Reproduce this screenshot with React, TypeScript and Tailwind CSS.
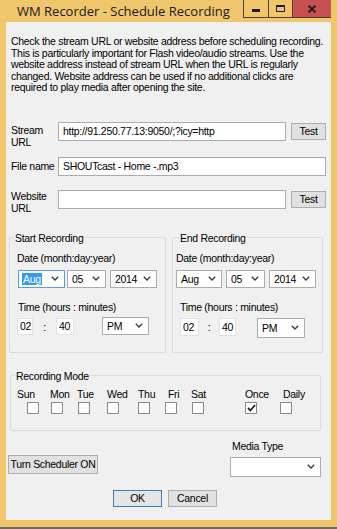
import React from "react";

function Chevron() {
  return (
    <svg width="8" height="5" viewBox="0 0 8 5" className="shrink-0">
      <polyline points="0.8,0.8 4,4 7.2,0.8" fill="none" stroke="#3c3c3c" strokeWidth="1.4" />
    </svg>
  );
}

function Sel({
  w,
  h,
  value,
  focused,
  highlight,
}: {
  w: string;
  h: string;
  value: string;
  focused?: boolean;
  highlight?: boolean;
}) {
  return (
    <div
      className={`${w} ${h} flex items-center bg-white border ${
        focused ? "border-[#569de5]" : "border-[#acacac]"
      } pl-[4px] pr-[5px]`}
    >
      {highlight ? (
        <span className="bg-[#3399ff] text-white px-[1px] leading-[12px] -ml-[1px]">{value}</span>
      ) : (
        <span className="leading-[12px]">{value}</span>
      )}
      <div className="ml-auto">
        <Chevron />
      </div>
    </div>
  );
}

function TimeBox({ w, h, value }: { w: string; h: string; value: string }) {
  return (
    <div className={`${w} ${h} bg-white border border-[#e3e3e3] flex items-center pl-[2px] leading-[12px]`}>
      {value}
    </div>
  );
}

function Btn({ w, h, label, def }: { w: string; h: string; label: string; def?: boolean }) {
  return (
    <div
      className={`${w} ${h} flex items-center justify-center whitespace-nowrap border ${
        def ? "border-[#3c7fb1] bg-[#e5e5e5]" : "border-[#adadad] bg-[#e1e1e1]"
      } leading-[12px]`}
    >
      {label}
    </div>
  );
}

function Check({ checked }: { checked?: boolean }) {
  return (
    <div className="w-[12px] h-[12px] bg-white border border-[#8a8a8a] flex items-center justify-center">
      {checked && (
        <svg width="9" height="8" viewBox="0 0 9 8">
          <polyline points="1,4 3.5,6.5 8,1" fill="none" stroke="#222" strokeWidth="1.8" />
        </svg>
      )}
    </div>
  );
}

const days = [
  { l: "Sun", lw: "w-[33px]", cw: "w-[24px]" },
  { l: "Mon", lw: "w-[27px]", cw: "w-[27px]" },
  { l: "Tue", lw: "w-[30px]", cw: "w-[29px]" },
  { l: "Wed", lw: "w-[31px]", cw: "w-[31px]" },
  { l: "Thu", lw: "w-[30px]", cw: "w-[27px]" },
  { l: "Fri", lw: "w-[23px]", cw: "w-[27px]" },
  { l: "Sat", lw: "w-[54px]", cw: "w-[53px]" },
  { l: "Once", lw: "w-[38px]", cw: "w-[35px]" },
  { l: "Daily", lw: "w-[30px]", cw: "w-[20px]" },
];

export default function App() {
  return (
    <div className="w-[337px] h-[529px] bg-[#efc66c] flex flex-col overflow-hidden font-['Liberation_Sans',Arial,sans-serif] text-[10.5px] tracking-[-0.3px] text-black">
      {/* Title bar */}
      <div className="h-[22px] flex items-start shrink-0">
        <div className="pl-[17px] pt-[2px] font-['Open_Sans',sans-serif] text-[13px] tracking-normal leading-[18px] text-[#1a1a1a] whitespace-nowrap">
          WM Recorder - Schedule Recording
        </div>
        <div className="ml-auto mr-[6px] flex h-[18px]">
          <div className="w-[25px] h-[18px] border-l border-b border-[#4d4030] flex items-end justify-center pb-[5px]">
            <div className="w-[8px] h-[3px] bg-[#1e1e1e]" />
          </div>
          <div className="w-[24px] h-[18px] border-l border-b border-[#4d4030] flex items-center justify-center">
            <div className="w-[9px] h-[7px] border border-t-2 border-[#1e1e1e]" />
          </div>
          <div className="w-[39px] h-[18px] bg-[#c75050] border-l border-b border-[#4d4030] flex items-center justify-center">
            <svg width="10" height="8" viewBox="0 0 10 8">
              <path d="M1.5 0.8 L8.5 7.2 M8.5 0.8 L1.5 7.2" stroke="#2a1a1a" strokeWidth="2" />
            </svg>
          </div>
        </div>
      </div>

      {/* Body */}
      <div className="mx-[6px] h-[498px] bg-[#f0f0f0] flex flex-col shrink-0">
        <div className="pt-[14px] pl-[5px] leading-[11.6px] whitespace-nowrap">
          Check the stream URL or website address before scheduling recording.
          <br />
          This is particularly important for Flash video/audio streams. Use the
          <br />
          website address instead of stream URL when the URL is regularly
          <br />
          changed. Website address can be used if no additional clicks are
          <br />
          required to play media after opening the site.
        </div>

        {/* Stream URL */}
        <div className="mt-[28px] flex h-[19px]">
          <div className="w-[52px] pl-[5px] pt-[2px] leading-[12px]">
            Stream
            <br />
            URL
          </div>
          <div className="w-[228px] h-[19px] bg-white border border-[#acacac] flex items-center pl-[4px] leading-[12px]">
            http://91.250.77.13:9050/;?icy=http
          </div>
          <div className="ml-[5px] flex items-center">
            <Btn w="w-[35px]" h="h-[17px]" label="Test" />
          </div>
        </div>

        {/* File name */}
        <div className="mt-[16px] flex h-[19px] items-center">
          <div className="w-[52px] pl-[5px] leading-[12px] whitespace-nowrap">File name</div>
          <div className="w-[268px] h-[19px] bg-white border border-[#acacac] flex items-center pl-[4px] leading-[12px]">
            SHOUTcast - Home -.mp3
          </div>
        </div>

        {/* Website URL */}
        <div className="mt-[14px] flex h-[19px]">
          <div className="w-[52px] pl-[5px] pt-0 leading-[12px]">
            Website
            <br />
            URL
          </div>
          <div className="w-[228px] h-[19px] bg-white border border-[#acacac]" />
          <div className="ml-[5px] flex items-center">
            <Btn w="w-[35px]" h="h-[17px]" label="Test" />
          </div>
        </div>

        {/* Start / End */}
        <div className="mt-[23px] flex">
          <fieldset className="ml-[3px] w-[157px] h-[121px] border border-[#dcdcdc] rounded-[2px]">
            <legend className="ml-[4px] px-[1px] leading-[12px]">Start Recording</legend>
            <div className="pt-[8px]">
              <div className="pl-[7px] leading-[12px]">Date (month:day:year)</div>
              <div className="mt-[6px] pl-[8px] flex">
                <Sel w="w-[47px]" h="h-[18px]" value="Aug" focused highlight />
                <div className="ml-[2px]">
                  <Sel w="w-[39px]" h="h-[18px]" value="05" />
                </div>
                <div className="ml-[4px]">
                  <Sel w="w-[47px]" h="h-[18px]" value="2014" />
                </div>
              </div>
              <div className="mt-[13px] pl-[8px] leading-[12px]">Time (hours : minutes)</div>
              <div className="mt-[4px] pl-[7px] flex items-start">
                <div className="mt-[1px]">
                  <TimeBox w="w-[16px]" h="h-[17px]" value="02" />
                </div>
                <div className="w-[23px] text-center mt-[4px] leading-[12px]">:</div>
                <div className="mt-[1px]">
                  <TimeBox w="w-[18px]" h="h-[17px]" value="40" />
                </div>
                <div className="ml-[28px]">
                  <Sel w="w-[47px]" h="h-[18px]" value="PM" />
                </div>
              </div>
            </div>
          </fieldset>

          <fieldset className="ml-[6px] w-[151px] h-[121px] border border-[#dcdcdc] rounded-[2px]">
            <legend className="ml-[6px] px-[1px] leading-[12px]">End Recording</legend>
            <div className="pt-[8px]">
              <div className="pl-[3px] leading-[12px]">Date (month:day:year)</div>
              <div className="mt-[6px] pl-[3px] flex">
                <Sel w="w-[46px]" h="h-[18px]" value="Aug" />
                <div className="ml-[4px]">
                  <Sel w="w-[39px]" h="h-[18px]" value="05" />
                </div>
                <div className="ml-[4px]">
                  <Sel w="w-[47px]" h="h-[18px]" value="2014" />
                </div>
              </div>
              <div className="mt-[13px] pl-[7px] leading-[12px]">Time (hours : minutes)</div>
              <div className="mt-[5px] pl-[7px] flex items-start">
                <TimeBox w="w-[19px]" h="h-[18px]" value="02" />
                <div className="w-[20px] text-center mt-[3px] leading-[12px]">:</div>
                <TimeBox w="w-[17px]" h="h-[18px]" value="40" />
                <div className="ml-[21px]">
                  <Sel w="w-[48px]" h="h-[20px]" value="PM" />
                </div>
              </div>
            </div>
          </fieldset>
        </div>

        {/* Recording Mode */}
        <fieldset className="mt-[17px] ml-[4px] w-[311px] h-[61px] border border-[#dcdcdc] rounded-[2px]">
          <legend className="ml-[4px] px-[1px] leading-[12px]">Recording Mode</legend>
          <div className="pt-[6px] pl-[6px] flex leading-[12px]">
            {days.map((d) => (
              <div key={d.l} className={`${d.lw} shrink-0`}>
                {d.l}
              </div>
            ))}
          </div>
          <div className="mt-[2px] pl-[16px] flex">
            {days.map((d) => (
              <div key={d.l} className={`${d.cw} shrink-0`}>
                <Check checked={d.l === "Once"} />
              </div>
            ))}
          </div>
        </fieldset>

        {/* Bottom */}
        <div className="mt-[9px] flex">
          <div className="ml-[2px] mt-[15px]">
            <Btn w="w-[90px]" h="h-[19px]" label="Turn Scheduler ON" />
          </div>
          <div className="ml-auto mr-[10px] w-[91px] flex flex-col">
            <div className="pl-[2px] leading-[12px]">Media Type</div>
            <div className="mt-[5px]">
              <Sel w="w-[91px]" h="h-[20px]" value="" />
            </div>
          </div>
        </div>

        <div className="mt-[13px] ml-[107px] flex">
          <Btn w="w-[49px]" h="h-[17px]" label="OK" def />
          <div className="ml-[6px]">
            <Btn w="w-[49px]" h="h-[17px]" label="Cancel" />
          </div>
        </div>
      </div>
      <div className="h-[7px] shrink-0" />
      <div className="h-[2px] bg-[#6e6a62] shrink-0" />
    </div>
  );
}
